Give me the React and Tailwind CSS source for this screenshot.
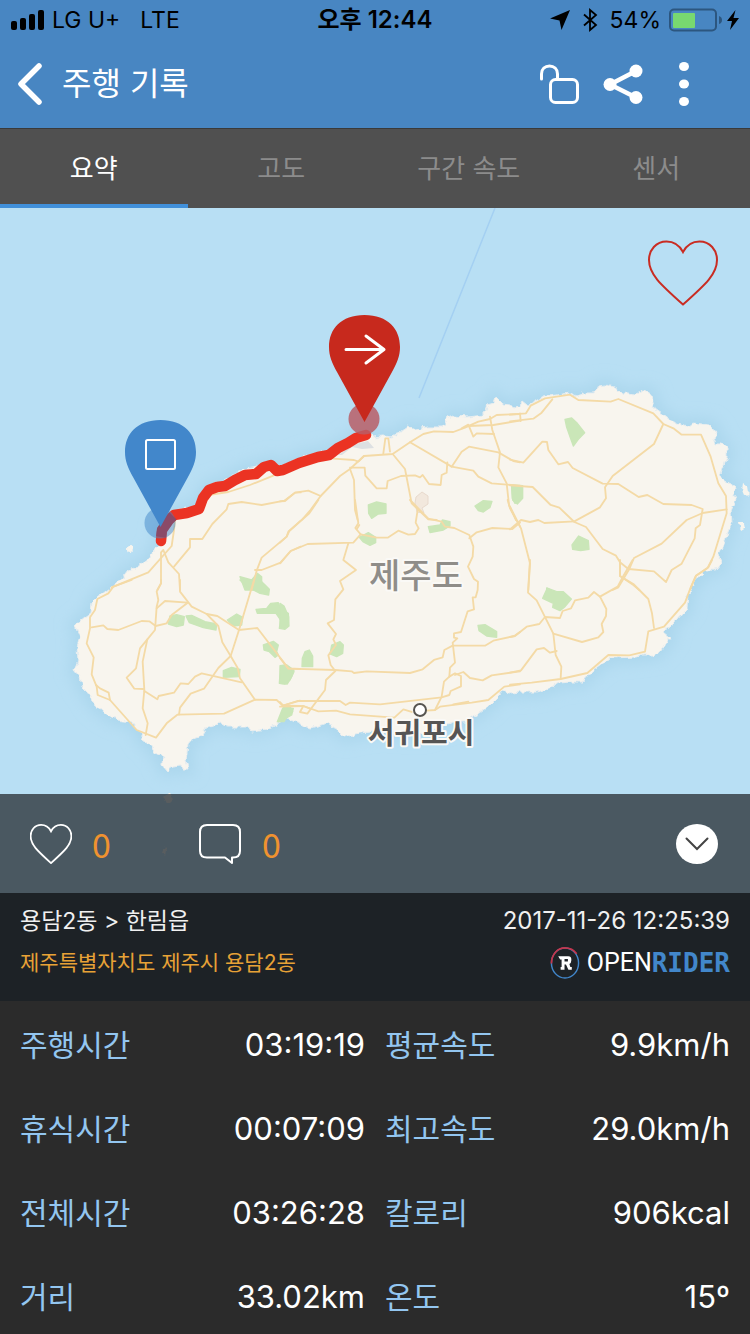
const LAND =
  "75,625 85,617 91,613 92,603 97,598 110,588 122,578 128,570 138,567 150,558 153,550 160,545 158,530 165,518 172,511 185,508 198,505 202,493 210,485 224,481 245,469 258,467 271,461 281,467 303,456 330,451 340,444 358,434 366,432 373,437 383,436 392,437 400,432 408,426 415,429 427,427 443,427 448,418 453,416 467,417 483,415 488,408 486,405 493,403 495,397 502,404 510,405 515,408 520,407 523,401 528,405 543,397 556,395 570,393 577,396 586,393 595,393 598,386 606,385 614,387 623,393 633,395 643,391 652,394 653,402 655,409 662,414 670,420 680,424 687,427 692,423 702,424 710,425 717,433 714,438 716,444 721,444 727,448 727,457 723,467 720,473 723,480 729,484 735,487 734,496 736,500 731,512 732,522 728,533 723,547 718,557 722,563 720,568 707,570 700,577 693,585 688,595 687,608 677,620 663,632 670,638 660,652 653,655 643,655 637,657 610,658 598,667 588,675 582,682 570,682 560,683 548,689 537,692 522,692 510,693 503,690 497,697 487,707 479,713 473,716 465,722 453,722 440,727 423,733 400,732 380,730 370,732 360,733 345,737 338,730 328,723 310,728 297,722 287,718 277,724 267,729 252,731 247,727 227,727 220,723 207,727 202,735 194,738 188,745 186,760 188,769 183,769 182,765 173,766 167,771 162,765 163,755 155,753 150,745 143,740 140,733 132,722 117,720 103,712 92,702 88,693 82,687 80,677 74,670 78,660 77,647 80,637";

/* Map features are stored per survey tile, in thirds of a map unit. */
const TILES = [
  {
    at: "translate(60 370) scale(0.33333)",
    parks: ["540,620 575,630 592,610 605,620 605,640 625,660 555,660"],
    roads: [
      "155,652 265,607 335,528 342,480 345,450",
      "292,660 303,640 303,547 310,540 325,577 357,612 360,660",
      "342,590 390,532 390,507 427,507 457,462 500,418 505,402 545,396 605,405 673,392 705,368 722,367",
      "445,375 505,366 570,345 640,317",
      "575,660 590,602 605,563 680,500 685,485 722,452",
      "585,600 605,600 662,578 692,543 722,530",
    ],
  },
  {
    at: "translate(280 300) scale(0.33333)",
    parks: [
      "265,615 290,606 318,612 318,640 295,642 275,655 266,640",
      "585,618 610,602 636,604 630,622 610,636 595,632",
      "695,560 720,562 720,600 705,610 697,595",
    ],
    roads: [
      "0,604 15,603 45,578 85,572 122,588",
      "65,660 90,632 122,588 180,528 210,507 252,468 338,462 390,427 430,402 462,394 520,396 555,383 595,365 630,357 650,345 720,342",
      "160,476 222,480 235,485 252,468",
      "310,460 316,415 325,415 330,455",
      "338,462 375,507 395,610 445,658 470,660",
      "210,503 254,503 256,527 290,565 320,565 323,543 363,528 405,526 420,532 428,525 447,552 482,555 485,525 500,518 502,487",
      "390,427 515,500 580,512 595,530 635,550 720,557",
      "515,500 545,455 567,440 655,457 700,483 720,487",
      "210,507 222,540 225,630 233,660",
      "545,385 565,374 580,410 590,400 642,402",
      "565,378 640,375 720,362",
      "630,350 637,390 660,457 655,502 680,550 687,615 708,660",
    ],
  },
  {
    at: "translate(510 370) scale(0.33333)",
    parks: [
      "165,148 185,144 202,160 224,188 205,208 190,228 180,200 170,172",
      "5,345 38,347 38,385 22,402 8,390",
      "186,525 206,498 235,512 237,538 212,542 188,538",
      "110,654 122,660 110,662",
    ],
    roads: [
      "0,134 48,130 62,107 105,85 180,74 205,90 302,95 325,87 430,130 460,162 492,176 515,194 573,194 602,260 625,340 648,378 650,430 610,560 592,595 558,617 540,660",
      "0,154 70,146 95,128 127,88",
      "30,130 32,153",
      "0,269 40,278 97,215 111,216 115,240 145,283 174,276 188,294 278,341 325,342 386,381 412,375 460,402 545,405 578,417 570,465 557,475 554,505 515,581 485,600 468,636 432,604 355,597 330,577 318,557 278,537 228,471 193,456 148,413 122,405 68,351 0,346",
      "460,162 432,222 308,318 285,352 288,385 270,412 193,454 103,459 85,450 60,456 33,450 0,478",
      "650,418 578,429 530,450 455,521 372,564 358,597 325,652 308,660",
      "330,577 330,618 370,645 388,660",
      "0,410 33,475 60,580 55,660",
    ],
  },
  {
    at: "translate(60 580) scale(0.33333)",
    parks: [
      "330,108 350,104 373,110 370,135 350,140 325,132",
      "378,108 395,106 435,125 470,132 468,150 430,143 388,128",
      "502,120 530,102 548,112 545,135 520,138",
      "540,0 600,0 628,28 626,45 600,40 560,20",
      "588,88 620,85 632,70 655,68 662,88 685,100 687,138 675,148 658,145 662,120 648,100 615,100 592,100",
      "610,195 640,184 655,195 650,215 655,225 645,232 628,215 612,210",
      "662,258 680,255 702,270 695,290 682,312 658,310",
      "490,272 515,262 540,268 538,290 490,292",
      "668,385 690,380 698,395 685,405 672,425 652,425",
    ],
    roads: [
      "215,0 160,20 145,40 112,57 105,90 90,112 90,145 80,190 101,232 95,283 110,320 113,345 150,360 230,450 288,473 320,430 352,404 492,401 585,359 650,360 668,377 720,362",
      "95,142 130,136 142,147 175,150 245,123 268,124 287,138 320,130 335,105 383,68 315,63 290,85",
      "303,0 303,10 290,35 295,60 290,80 285,150 262,178 240,205 228,265 200,293 223,326 250,327",
      "262,178 248,245 253,330 248,385 263,430 257,465",
      "108,315 120,325 146,338 150,360",
      "253,333 292,358 296,348 342,338 362,310 385,312 405,290 425,280 545,307",
      "360,0 360,35 395,80 440,102 472,108 537,150 592,144 685,265 720,267",
      "440,102 475,138 487,187 512,228 533,264 540,295 585,359",
      "582,0 537,150 512,228 475,264 432,326 392,341 360,383 357,404",
      "668,377 720,378",
    ],
  },
  {
    at: "translate(280 500) scale(0.33333)",
    parks: [
      "0,310 12,318 26,350 25,375 0,385",
      "238,112 265,98 287,112 287,128 270,136 250,126",
      "445,80 480,75 487,60 510,65 510,78 490,90 450,98",
      "150,462 155,435 180,425 190,435 188,460 170,470",
      "67,475 75,455 88,450 98,468 98,500 66,500",
      "0,497 20,495 42,515 30,540 15,552 0,550",
      "594,376 615,374 650,395 650,412 620,408 597,392",
      "10,622 40,625 35,645 0,665",
    ],
    roads: [
      "0,128 20,110 28,93 88,40 115,0",
      "0,190 32,153 83,132 220,128 242,103 290,113 323,113 355,92 385,104 405,102 416,85 407,68 413,30",
      "225,0 235,70 226,84 242,103",
      "238,75 230,88",
      "205,130 190,180 228,210 180,243 190,268 166,298 162,360 143,370 168,402 160,418 168,435 145,466 152,495 166,513 138,540 135,570 82,641 60,636 70,618 115,634 168,632 210,643 343,653 370,628 395,636",
      "0,474 25,506 166,510 215,514 222,519 260,514 390,519 428,508 462,480 488,472 493,450 518,437 615,437 640,422 703,408 720,396",
      "390,0 445,56 485,65 495,80 523,84 568,105 580,140 578,170 564,200 582,237 594,245 593,270 587,292 578,292 582,328 563,334 543,396 522,400 522,413 532,415 518,428 525,488 510,503 508,530 492,545 485,590 465,630 440,632",
      "568,115 590,97 637,84 697,87 720,68",
      "683,0 690,25 720,80",
      "0,606 10,617 52,603 180,603 197,615 210,608 300,613 485,592 508,585 512,573 543,559 543,528 525,520 508,530",
      "525,525 550,516 570,534 608,541 635,526 720,514",
      "0,620 70,618 90,626",
      "465,630 480,620 575,608 625,600 673,560 720,553",
      "520,613 565,605",
    ],
  },
  {
    at: "translate(510 560) scale(0.33333)",
    parks: ["98,115 112,84 140,95 160,95 184,117 165,140 150,152 128,142 130,130"],
    roads: [
      "60,0 54,98 80,121 130,221 137,285 154,320 152,355",
      "0,231 15,228 50,200 88,192 105,171 150,174 158,153 183,145 195,121 235,113 252,96 270,110 323,80 340,48 368,0",
      "270,110 289,147 288,168 275,192 280,216 265,232 216,246 130,221",
      "330,0 330,48 370,72 415,117 426,160 432,204",
      "0,338 33,331 80,268 102,264 120,278 140,273",
      "0,374 65,368 152,357 232,339 295,285 358,286 405,275 415,214 462,200 525,128 543,80 558,47 595,22 606,0",
    ],
  },
];

const ROUTE =
  "M161 541 L162 530 L169 520 L174 515 L187 513 L199 509 L203 498 L209 490 L217 487 L225 486 L235 480 L245 475 L256 474 L264 467 L271 465 L277 471 L283 470 L299 463 L318 457 L329 455 L338 448 L348 443 L356 438 L366 435";

const PIN =
  "M35.500 0 C59 0 71 14 71 32 C71 41 68 48 63 57 L35.500 107 L8 57 C3 48 0 41 0 32 C0 14 12 0 35.500 0 Z";

const HEART =
  "M35 12 C31 4.500 25 1.500 18.500 1.500 C8 1.500 1 10 1 20 C1 34 12 44 35 64.500 C58 44 69 34 69 20 C69 10 62 1.500 51.500 1.500 C45 1.500 39 4.500 35 12 Z";

const TABS = ["요약", "고도", "구간 속도", "센서"];

const STATS = [
  ["주행시간", "03:19:19"],
  ["평균속도", "9.9km/h"],
  ["휴식시간", "00:07:09"],
  ["최고속도", "29.0km/h"],
  ["전체시간", "03:26:28"],
  ["칼로리", "906kcal"],
  ["거리", "33.02km"],
  ["온도", "15º"],
];

function StatusBar() {
  return (
    <div className="grid h-10 grid-cols-3 items-center px-[11px] text-[23px] text-black">
      <div className="flex items-center gap-2">
        <svg className="h-5 w-[33px]" viewBox="0 0 33 20">
          <rect x="0" y="11" width="6" height="9" rx="2" />
          <rect x="9" y="8" width="6" height="12" rx="2" />
          <rect x="18" y="4" width="6" height="16" rx="2" />
          <rect x="27" y="0" width="6" height="20" rx="2" />
        </svg>
        <span>LG U+</span>
        <span className="pl-3">LTE</span>
      </div>
      <div className="text-center text-2xl font-semibold whitespace-nowrap">오후 12:44</div>
      <div className="flex items-center justify-end gap-1">
        <svg className="mr-2 h-5 w-5" viewBox="0 0 20 20">
          <path d="M20 0 L11.500 20 L9.500 10.500 L0 8.500 Z" />
        </svg>
        <svg className="mr-2 h-6 w-4" viewBox="0 0 16 24" fill="none" stroke="black" strokeWidth="1.800">
          <path d="M2 6.500 L14 17 L8 22 V2 L14 7 L2 17.500" />
        </svg>
        <span>54%</span>
        <svg className="ml-1 h-6 w-[54px]" viewBox="0 0 54 24">
          <rect x="1" y="1.500" width="46" height="21" rx="4" fill="none" stroke="#2c567f" strokeWidth="2" />
          <rect x="4" y="5" width="22" height="15" rx="1" fill="#78d870" />
          <path d="M50 8 Q53 9 53 12 Q53 15 50 16 Z" fill="#2c567f" />
        </svg>
        <svg className="h-5 w-3" viewBox="0 0 12 20">
          <path d="M8.500 0 L0 11 H5 L3 20 L12 8 H6.500 Z" />
        </svg>
      </div>
    </div>
  );
}

function NavBar() {
  return (
    <div className="flex h-[88px] items-center pl-4 text-white">
      <button aria-label="뒤로" className="h-11 w-7">
        <svg className="h-11 w-7" viewBox="0 0 28 44" fill="none" stroke="currentColor" strokeWidth="5.500" strokeLinecap="round" strokeLinejoin="round">
          <path d="M23 4 L5 22 L23 40" />
        </svg>
      </button>
      <h1 className="ml-[18px] flex-1 text-[32px] leading-10">주행 기록</h1>
      <div className="flex items-center pr-[61px]">
        <button aria-label="잠금 해제">
          <svg className="h-10 w-10" viewBox="0 0 40 40" fill="none" stroke="currentColor" strokeWidth="3" strokeLinecap="round">
            <path d="M1.500 15 V10 C1.500 5 5 2 9.500 2 C14 2 17.500 5 17.500 10 V15.500" />
            <rect x="10.500" y="15.500" width="27" height="23" rx="5" />
          </svg>
        </button>
        <button aria-label="공유" className="ml-[23px]">
          <svg className="h-10 w-10" viewBox="0 0 40 40" fill="currentColor">
            <path d="M33 7 L7 20.500 L33 33.500" fill="none" stroke="currentColor" strokeWidth="4.500" />
            <circle cx="7" cy="20.500" r="6.500" />
            <circle cx="33" cy="7" r="6.500" />
            <circle cx="33" cy="33.500" r="6.500" />
          </svg>
        </button>
        <button aria-label="더보기" className="ml-9">
          <svg className="h-11 w-[10px]" viewBox="0 0 10 44" fill="currentColor">
            <ellipse cx="5" cy="4.500" rx="5" ry="4.500" />
            <ellipse cx="5" cy="22" rx="5" ry="4.500" />
            <ellipse cx="5" cy="39.500" rx="5" ry="4.500" />
          </svg>
        </button>
      </div>
    </div>
  );
}

function Tabs() {
  return (
    <nav className="grid h-20 grid-cols-4 border-t border-[#3a3a3a] bg-[#505050] text-[26px]">
      {TABS.map((label, i) => (
        <button
          key={label}
          className={
            i === 0
              ? "border-y-4 border-t-transparent border-b-[#4190da] text-white"
              : "border-y-4 border-transparent text-[#8c8c8c]"
          }
        >
          {label}
        </button>
      ))}
    </nav>
  );
}

function JejuMap() {
  return (
    <svg className="block h-[685px] w-full bg-[#b8dff4]" viewBox="0 208 750 685" preserveAspectRatio="xMidYMid slice" role="img" aria-label="주행 경로 지도">
      <defs>
        <filter id="coast" x="-5%" y="-5%" width="110%" height="110%">
          <feTurbulence type="fractalNoise" baseFrequency="0.16" numOctaves="2" seed="4" result="n" />
          <feDisplacementMap in="SourceGraphic" in2="n" scale="6" xChannelSelector="R" yChannelSelector="G" />
        </filter>
        <filter id="shallow" x="-10%" y="-10%" width="120%" height="120%">
          <feGaussianBlur stdDeviation="7" />
        </filter>
      </defs>
      <rect x="0" y="208" width="750" height="685" fill="#b8dff4" />
      <path d="M495 208 L419 398" stroke="#a4d0f2" strokeWidth="1.500" />
      <polygon points={LAND} fill="#acd7ed" stroke="#acd7ed" strokeWidth="12" filter="url(#shallow)" />
      <g filter="url(#coast)" fill="#f8f5ee">
        <polygon points={LAND} stroke="#e8edef" strokeWidth="1" />
        <circle cx="130" cy="549" r="3" />
        <path d="M743 483 L747 486 L748 492 L750 494 L744 495 L742 490 Z M739 523 L745 523 L746 528 L741 531 Z" />
        <path d="M168 793 L173 798 L168 803 L163 798 Z M165 847 L167 850 L166 856 L163 852 Z" />
      </g>
      <path d="M338 455 L355 444 L368 441 L374 448 L362 449 L352 447 L342 455 Z" fill="#dde0e2" />
      <path d="M416 497 L422 492 L428 496 L428 504 L422 508 L424 513 L417 512 L415 503 Z" fill="#f2e8dd" stroke="#e8dacd" strokeWidth="1" />
      {TILES.map((tile) => (
        <g key={tile.at} transform={tile.at}>
          {tile.parks.map((p) => (
            <polygon key={p} points={p} fill="#cae6b8" stroke="#cae6b8" strokeWidth="4" strokeLinejoin="round" />
          ))}
        </g>
      ))}
      {TILES.map((tile) => (
        <g key={tile.at} transform={tile.at} fill="none" stroke="#f4daa6" strokeWidth="5.500" strokeLinejoin="round" strokeLinecap="round">
          {tile.roads.map((r) => (
            <polyline key={r} points={r} />
          ))}
        </g>
      ))}
      <path d={ROUTE} fill="none" stroke="#eb3323" strokeWidth="10.500" strokeLinecap="round" strokeLinejoin="round" />
      <circle cx="160" cy="523" r="15.500" fill="#4287c9" opacity="0.500" />
      <path d="M161 537 L162 530 L169 520 L173 516" fill="none" stroke="#8a4a68" strokeWidth="10" />
      <path d={PIN} transform="translate(125 420)" fill="#4287cb" />
      <rect x="146" y="440" width="29" height="29" rx="1.500" fill="none" stroke="white" strokeWidth="2" />
      <circle cx="364" cy="419" r="15.500" fill="#b95e66" opacity="0.850" />
      <path d={PIN} transform="translate(329 315)" fill="#c7291d" />
      <path d="M346 349.500 H383 M366 336 L384 349.500 L366 363" fill="none" stroke="white" strokeWidth="3" strokeLinecap="round" strokeLinejoin="round" />
      <circle cx="420" cy="710" r="6" fill="white" stroke="#565450" strokeWidth="2" />
      <g textAnchor="middle" stroke="#faf9f6" strokeWidth="4" strokeLinejoin="round" paintOrder="stroke">
        <text x="416" y="588" fontSize="34" fontWeight="500" fill="#8f8d89">제주도</text>
        <text x="421" y="744" fontSize="29" fontWeight="700" fill="#555555">서귀포시</text>
      </g>
    </svg>
  );
}

function Reactions() {
  return (
    <div className="absolute inset-x-0 bottom-0 flex h-[99px] items-center bg-[#2b3237]/78 pr-8 pl-[30px] font-['Noto_Sans_CJK_KR',sans-serif] text-[34px] leading-10 text-[#f0922f]">
      <button aria-label="좋아요 0" className="flex w-[168px] items-center gap-5">
        <svg className="h-10 w-[42px]" viewBox="0 0 70 66" preserveAspectRatio="none" fill="none" stroke="white" strokeWidth="3">
          <path d={HEART} />
        </svg>
        <span>0</span>
      </button>
      <button aria-label="댓글 0" className="flex items-center gap-5">
        <svg className="h-10 w-[44px]" viewBox="0 0 44 40" fill="none" stroke="white" strokeWidth="2" strokeLinejoin="round">
          <path d="M9 1 H35 Q42 1 42 8 V27 Q42 33.500 35 33.500 H34 V39 L27 33.500 H9 Q2 33.500 2 27 V8 Q2 1 9 1 Z" />
        </svg>
        <span>0</span>
      </button>
      <button aria-label="접기" className="ml-auto">
        <svg className="h-[42px] w-[42px]" viewBox="0 0 42 42" fill="none">
          <ellipse cx="21" cy="21" rx="21" ry="20" fill="white" />
          <path d="M10.500 15.500 L21 26 L31.500 15.500" stroke="#444444" strokeWidth="2" strokeLinecap="round" />
        </svg>
      </button>
    </div>
  );
}

function Brand() {
  return (
    <div className="flex items-center text-[25px] leading-8">
      <svg className="mr-[7px] h-8 w-[30px]" viewBox="0 0 30 33" fill="none">
        <ellipse cx="15" cy="16.500" rx="14" ry="15.500" stroke="#4287cb" strokeWidth="1.500" />
        <path d="M1 17 C1 8 7 1 15 1 C20 1 24 3 27 7" stroke="#c8344a" strokeWidth="1.800" />
        <path d="M8 9.500 H18.500 Q21.500 9.500 21.500 12.500 V14 Q21.500 16.500 19.500 17.500 L20.500 20.500 H22 V23.500 H18.500 L16 18 H14.500 V23.500 H10.500 V20.500 H11.500 V13 H10 Z M14.500 12.500 V15 H18 V12.500 Z" fill="white" fillRule="evenodd" />
      </svg>
      <span className="font-['Roboto',sans-serif] text-white">OPEN</span>
      <span className="font-['DejaVu_Sans_Mono',monospace] text-[26px] font-bold text-[#4287cb]">RIDER</span>
    </div>
  );
}

export default function App() {
  return (
    <div className="min-h-screen bg-[#2b2b2b] font-['Inter','Noto_Sans_CJK_KR',sans-serif]">
      <header className="bg-[#4886c2]">
        <StatusBar />
        <NavBar />
      </header>
      <Tabs />
      <main>
        <section className="relative">
          <JejuMap />
          <button aria-label="즐겨찾기" className="absolute top-8 right-8">
            <svg className="h-[66px] w-[70px]" viewBox="0 0 70 66" fill="none" stroke="#c92c22" strokeWidth="2">
              <path d={HEART} />
            </svg>
          </button>
          <Reactions />
        </section>
        <section className="flex h-[108px] justify-between bg-[#1d2226] px-5 pt-3">
          <div>
            <p className="text-[23px] leading-8 text-[#f0f0f0]">용담2동 &gt; 한림읍</p>
            <p className="mt-[10px] text-[21px] leading-8 text-[#e8a236]">제주특별자치도 제주시 용담2동</p>
          </div>
          <div className="flex flex-col items-end">
            <time className="text-2xl leading-8 text-[#f0f0f0]">2017-11-26 12:25:39</time>
            <div className="mt-[10px]">
              <Brand />
            </div>
          </div>
        </section>
        <dl className="grid grid-cols-2 gap-x-5 gap-y-9 px-5 pt-5">
          {STATS.map(([label, value]) => (
            <div key={label} className="flex h-12 items-center justify-between">
              <dt className="text-3xl text-[#93c6f0]">{label}</dt>
              <dd className="text-[31px] text-white">{value}</dd>
            </div>
          ))}
        </dl>
      </main>
    </div>
  );
}
